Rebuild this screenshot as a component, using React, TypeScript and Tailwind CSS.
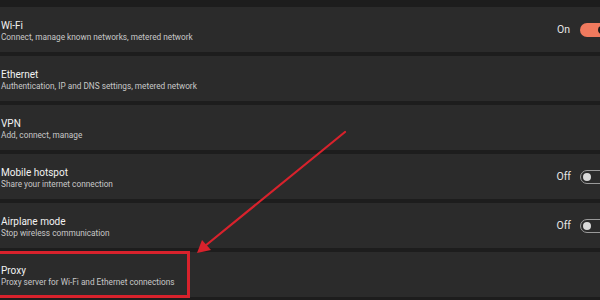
import React from 'react';

interface Row {
  title: string;
  subtitle: string;
  toggle?: 'on' | 'off';
}

const rows: Row[] = [
  { title: 'Wi-Fi', subtitle: 'Connect, manage known networks, metered network', toggle: 'on' },
  { title: 'Ethernet', subtitle: 'Authentication, IP and DNS settings, metered network' },
  { title: 'VPN', subtitle: 'Add, connect, manage' },
  { title: 'Mobile hotspot', subtitle: 'Share your internet connection', toggle: 'off' },
  { title: 'Airplane mode', subtitle: 'Stop wireless communication', toggle: 'off' },
  { title: 'Proxy', subtitle: 'Proxy server for Wi-Fi and Ethernet connections' }
];

const Toggle: React.FC<{ state: 'on' | 'off' }> = ({ state }) => {
  if (state === 'on') {
    return (
      <div className="flex items-center gap-[10px]">
        <span className="text-[10.5px] text-[#e6e6e6]">On</span>
        <div className="w-[32px] h-[14px] rounded-full bg-[#f07a5e] flex items-center justify-end pr-[6px] mr-[-12px]">
          <div className="w-[8px] h-[8px] rounded-full bg-[#1a1a1a]" />
        </div>
      </div>
    );
  }
  return (
    <div className="flex items-center gap-[9px]">
      <span className="text-[10.5px] text-[#e6e6e6]">Off</span>
      <div className="w-[32px] h-[14px] rounded-full border border-[#9a9a9a] flex items-center pl-[2px] mr-[-12px]">
        <div className="w-[8px] h-[8px] rounded-full bg-[#d9d9d9]" />
      </div>
    </div>
  );
};

export default function App() {
  return (
    <div
      className="relative w-[600px] h-[300px] overflow-hidden bg-[#1d1d1d] pt-[7px] flex flex-col gap-[4px]"
      style={{ fontFamily: 'Roboto, "Liberation Sans", sans-serif' }}
    >
      {rows.map(row => (
        <div
          key={row.title}
          className="h-[45px] shrink-0 bg-[#2b2b2b] flex items-center justify-between pl-[1px] pr-0"
        >
          <div className="flex flex-col pt-[4px]">
            <span className="text-[10px] text-[#f2f2f2] leading-[12px]">{row.title}</span>
            <span className="text-[8.25px] text-[#c8c8c8] leading-[12px] mt-[-1px]">{row.subtitle}</span>
          </div>
          {row.toggle && <Toggle state={row.toggle} />}
        </div>
      ))}

      {/* highlight box round Proxy */}
      <div className="absolute left-[-3px] top-[251px] w-[193px] h-[47px] border-[3px] border-[#d8222c]" />

      {/* arrow */}
      <svg className="absolute left-0 top-0" width="600" height="300" viewBox="0 0 600 300">
        <line x1="345" y1="132" x2="205" y2="246" stroke="#d8222c" strokeWidth="2.2" strokeLinecap="round" />
        <polygon points="197,253 202,240 211,250" fill="#d8222c" />
      </svg>
    </div>
  );
}
